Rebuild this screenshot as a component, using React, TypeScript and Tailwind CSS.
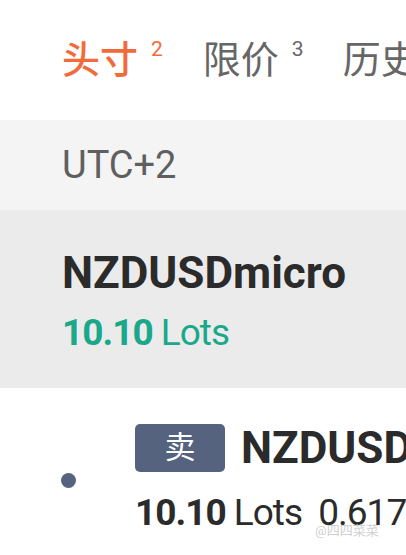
export default function App() {
  const latin = "font-['Roboto','Noto_Sans_CJK_SC',sans-serif]";
  return (
    <div className={`w-[406px] h-[555px] overflow-hidden bg-white ${latin}`}>
      {/* tabs */}
      <div className="h-[120px] flex items-center pl-[62px] whitespace-nowrap">
        <div className="flex items-start text-[#f26b3a] shrink-0">
          <span className="text-[38px] leading-none font-medium">头寸</span>
          <span className="text-[21px] leading-none ml-[13px] -mt-[2px]">2</span>
        </div>
        <div className="flex items-start text-[#666] ml-[40px] shrink-0">
          <span className="text-[38px] leading-none">限价</span>
          <span className="text-[21px] leading-none ml-[13px] -mt-[2px]">3</span>
        </div>
        <div className="flex items-start text-[#666] ml-[39px] shrink-0">
          <span className="text-[38px] leading-none">历史</span>
        </div>
      </div>

      {/* timezone */}
      <div className="h-[90px] bg-[#f4f4f4] flex items-center pl-[62px]">
        <span className="text-[38px] text-[#5f5f5f] leading-none">UTC+2</span>
      </div>

      {/* selected symbol */}
      <div className="h-[178px] bg-[#ebebeb] pl-[62px] pt-[37px]">
        <div className="text-[44px] font-bold text-[#2b2b2b] leading-[52px]">NZDUSDmicro</div>
        <div className="text-[37px] text-[#19a88a] leading-[44px] mt-[12px] tracking-[-1px]">
          <span className="font-bold">10.10</span> Lots
        </div>
      </div>

      {/* position row */}
      <div className="flex pt-[36px] whitespace-nowrap">
        <div className="w-[135px] shrink-0 flex items-start pl-[61px] pt-[49px]">
          <div className="w-[15px] h-[15px] rounded-full bg-[#55637e]" />
        </div>
        <div className="flex flex-col shrink-0">
          <div className="flex items-center">
            <div className="w-[90px] h-[48px] rounded-[5px] bg-[#55637e] flex items-center justify-center text-white text-[31px]">
              卖
            </div>
            <span className="ml-[16px] text-[44px] font-bold text-[#2b2b2b] leading-none">NZDUSD</span>
          </div>
          <div className="relative mt-[22px] text-[37px] text-[#2b2b2b] leading-none tracking-[-1px]">
            <span className="font-bold">10.10</span> Lots <span className="ml-[8px]">0.617</span>
            <span className="absolute left-[180px] top-[30px] text-[13px] text-[#d0d0d0] tracking-normal">@四四菜菜</span>
          </div>
        </div>
      </div>
    </div>
  );
}
